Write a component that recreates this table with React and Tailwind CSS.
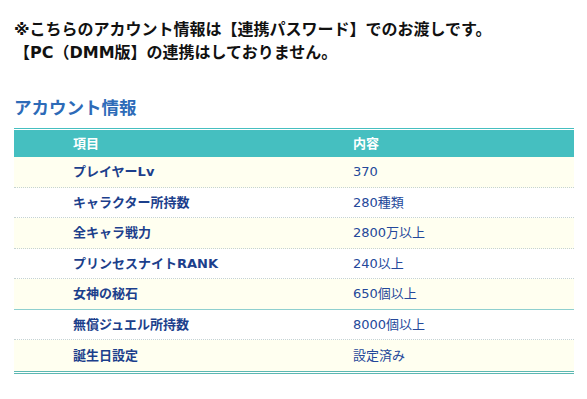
import React from "react";

const rows = [
  ["プレイヤーLv", "370"],
  ["キャラクター所持数", "280種類"],
  ["全キャラ戦力", "2800万以上"],
  ["プリンセスナイトRANK", "240以上"],
  ["女神の秘石", "650個以上"],
  ["無償ジュエル所持数", "8000個以上"],
  ["誕生日設定", "設定済み"],
];

const font = { fontFamily: '"DejaVu Sans", "Noto Sans CJK JP", sans-serif' };

export default function App() {
  return (
    <div className="bg-white w-[587px] h-[399px] px-[14px] pt-[18px]" style={font}>
      <div className="text-[16px] leading-[23px] font-bold text-[#111111]">
        <div>※こちらのアカウント情報は【連携パスワード】でのお渡しです。</div>
        <div>【PC（DMM版】の連携はしておりません。</div>
      </div>
      <h2 className="mt-[32px] text-[17.5px] leading-[24px] font-bold text-[#2d6bb8]">アカウント情報</h2>
      <div className="mt-[8px] w-[560px] border-t border-[#45bfc0] pt-px border-b-[3px] border-double border-b-[#5cb8b2]">
        <div className="grid grid-cols-2 h-[27px] items-center bg-[#45bfc0] text-white font-bold text-[13px]">
          <div className="pl-[59px]">項目</div>
          <div className="pl-[59px]">内容</div>
        </div>
        {rows.map(([k, v], i) => (
          <div
            key={k}
            className={`grid grid-cols-2 h-[30.57px] items-center text-[13px] text-[#1c3f8c] ${
              i % 2 === 0 ? "bg-[#fffff0]" : "bg-white"
            } ${
              i === 6
                ? ""
                : i === 4
                ? "border-b border-[#8fd0cf]"
                : "border-b border-dotted border-[#c5d3d3]"
            }`}
          >
            <div className="pl-[59px] font-bold">{k}</div>
            <div className="pl-[59px] text-[#24489a]">{v}</div>
          </div>
        ))}
      </div>
    </div>
  );
}
